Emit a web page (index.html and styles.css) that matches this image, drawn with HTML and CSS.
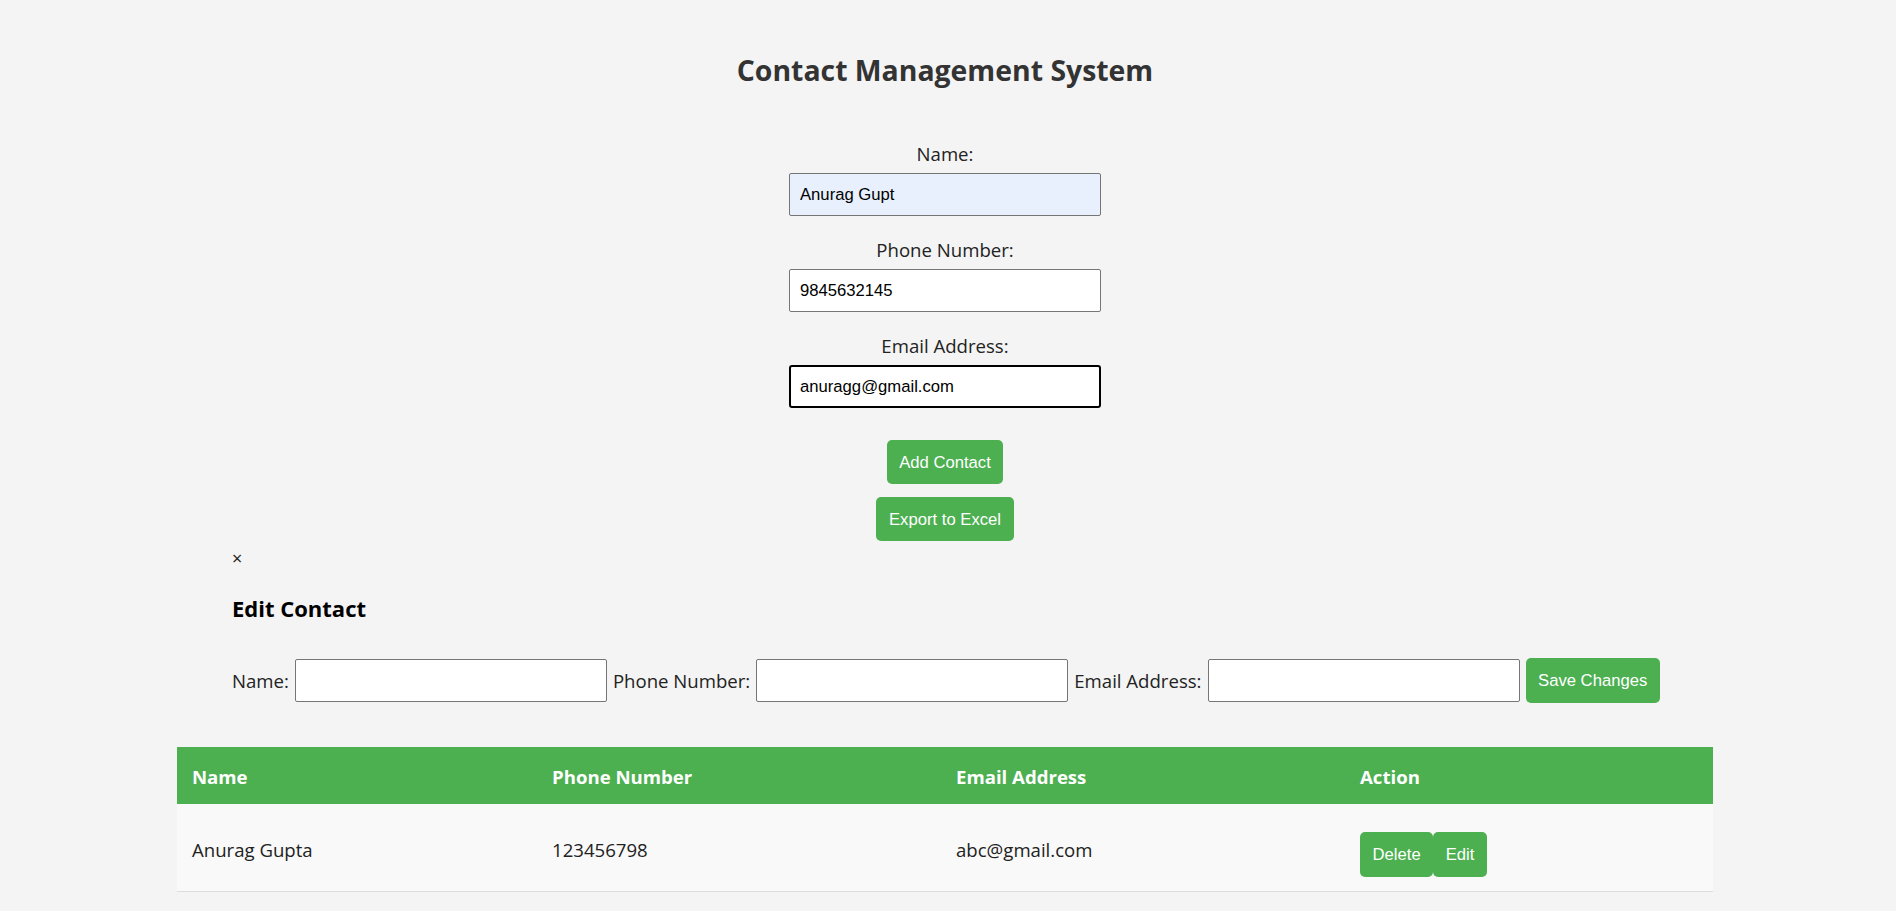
FILE: index.html
```html
<!DOCTYPE html>
<html lang="en">
<head>
<meta charset="utf-8">
<title>Contact Management System</title>
<link rel="stylesheet" href="styles.css">
</head>
<body>
<div class="page">
  <h1 class="title">Contact Management System</h1>

  <form class="contact-form">
    <div class="field">
      <label class="field-label">Name:</label>
      <input class="text-input autofill" type="text" value="Anurag Gupt">
    </div>
    <div class="field">
      <label class="field-label">Phone Number:</label>
      <input class="text-input" type="text" value="9845632145">
    </div>
    <div class="field">
      <label class="field-label">Email Address:</label>
      <input class="text-input focused" type="text" value="anuragg@gmail.com">
    </div>
    <div class="actions">
      <button type="button" class="btn">Add Contact</button>
      <button type="button" class="btn">Export to Excel</button>
    </div>
  </form>

  <div class="modal">
    <div class="close-row"><span class="close">×</span></div>
    <h3 class="modal-title">Edit Contact</h3>
    <div class="edit-row">
      <label class="edit-label">Name:</label>
      <input class="text-input" type="text">
      <label class="edit-label">Phone Number:</label>
      <input class="text-input" type="text">
      <label class="edit-label">Email Address:</label>
      <input class="text-input" type="text">
      <button type="button" class="btn btn-save">Save Changes</button>
    </div>
  </div>

  <table class="contacts">
    <colgroup>
      <col class="col-name">
      <col class="col-phone">
      <col class="col-email">
      <col class="col-action">
    </colgroup>
    <thead>
      <tr>
        <th>Name</th>
        <th>Phone Number</th>
        <th>Email Address</th>
        <th>Action</th>
      </tr>
    </thead>
    <tbody>
      <tr>
        <td>Anurag Gupta</td>
        <td>123456798</td>
        <td>abc@gmail.com</td>
        <td class="action-cell"><button type="button" class="btn btn-small">Delete</button><button type="button" class="btn btn-small">Edit</button></td>
      </tr>
    </tbody>
  </table>
</div>
</body>
</html>
```

FILE: styles.css
```css
html, body {
  margin: 0;
  padding: 0;
  background: #f4f4f4;
}

body {
  font-family: "Open Sans", "Noto Sans", sans-serif;
  font-size: 18.6px;
  color: #222;
}

.page {
  width: 1890px;
  padding-top: 50px;
}

.title {
  margin: 0;
  font-size: 28.4px;
  line-height: 40px;
  font-weight: 700;
  color: #333;
  text-align: center;
}

.contact-form {
  margin-top: 53px;
  display: flex;
  flex-direction: column;
  align-items: center;
}

.field {
  display: flex;
  flex-direction: column;
  align-items: center;
  margin-bottom: 23px;
}

.field-label {
  line-height: 22px;
  margin-bottom: 8px;
  color: #222;
}

.text-input {
  box-sizing: border-box;
  width: 312px;
  height: 43px;
  padding: 0 10px;
  border: 1px solid #767676;
  border-radius: 2px;
  background: #fff;
  font-family: "Liberation Sans", Arial, sans-serif;
  font-size: 16.67px;
  color: #000;
  margin: 0;
}

.autofill {
  background: #e8f0fe;
}

.focused {
  border: 2px solid #000;
  border-radius: 3px;
  padding: 0 9px;
}

.actions {
  margin-top: 9px;
  display: flex;
  flex-direction: column;
  align-items: center;
  gap: 13px;
}

.btn {
  box-sizing: border-box;
  background: #4caf50;
  color: #fff;
  border: none;
  border-radius: 5px;
  padding: 12.5px;
  font-family: "Liberation Sans", Arial, sans-serif;
  font-size: 16.67px;
  line-height: 19px;
  margin: 0;
  cursor: pointer;
}

.modal {
  padding-left: 232px;
  margin-top: 6px;
  color: #000;
}

.close-row {
  line-height: 22px;
  height: 22px;
}

.close {
  font-size: 18px;
  color: #222;
}

.modal-title {
  margin: 24px 0 0;
  font-size: 22px;
  line-height: 30px;
  font-weight: 700;
}

.edit-row {
  margin-top: 35px;
  display: flex;
  align-items: center;
  gap: 6px;
  height: 45px;
}

.edit-label {
  color: #222;
  line-height: 24px;
}

.btn-save {
  height: 45px;
}

.contacts {
  margin: 44px auto 0;
  width: 1536px;
  border-collapse: collapse;
  table-layout: fixed;
}

.col-name { width: 360px; }
.col-phone { width: 404px; }
.col-email { width: 404px; }
.col-action { width: 368px; }

.contacts th {
  background: #4caf50;
  color: #fff;
  text-align: left;
  font-weight: 700;
  height: 57px;
  box-sizing: border-box;
  padding: 18px 15px 0;
  line-height: 24px;
  vertical-align: top;
}

.contacts td {
  background: #f9f9f9;
  color: #222;
  height: 87px;
  padding: 34px 15px 0;
  box-sizing: border-box;
  line-height: 24px;
  vertical-align: top;
  border-bottom: 1px solid #ddd;
}

.contacts td.action-cell {
  padding-top: 28px;
}

.btn-small {
  height: 45px;
  vertical-align: top;
}
```
